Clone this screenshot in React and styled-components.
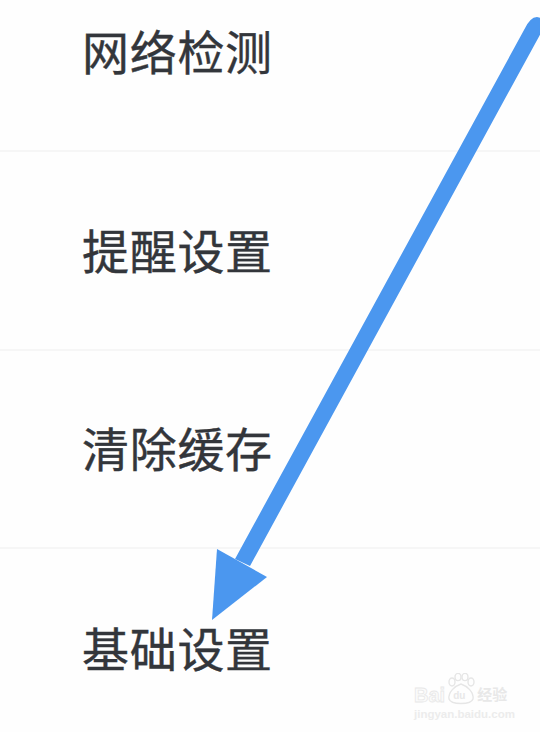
import React from "react";
import styled, { createGlobalStyle } from "styled-components";

const Global = createGlobalStyle`
  html, body {
    margin: 0;
    padding: 0;
    background: #fefefe;
  }
`;
const Page = styled.div`
  width: 540px;
  height: 732px;
  position: relative;
  overflow: hidden;
  background: #fefefe;
  font-family: "Liberation Sans", "Noto Sans CJK SC", sans-serif;
`;
const List = styled.div`
  display: flex;
  flex-direction: column;
`;
const Row = styled.div`
  height: ${(props) => props.h}px;
  box-sizing: border-box;
  display: flex;
  align-items: flex-end;
  padding: 0 0 ${(props) => props.pb}px 82px;
  border-bottom: ${(props) => (props.last ? "none" : "2px solid #f6f6f6")};
`;
const Label = styled.div`
  font-size: 47px;
  line-height: 56px;
  color: #33363b;
  letter-spacing: 0.7px;
  white-space: nowrap;
  -webkit-text-stroke: 0.4px #33363b;
`;
const Arrow = styled.svg`
  position: absolute;
  left: 0;
  top: 0;
`;
const Mark = styled.div`
  position: absolute;
  left: 414px;
  top: 673px;
  width: 104px;
  color: #ececec;
`;
const MarkTop = styled.div`
  display: flex;
  align-items: flex-end;
  height: 32px;
`;
const MarkBai = styled.span`
  font-size: 20px;
  line-height: 20px;
  font-weight: 700;
  color: #fbfbfb;
  -webkit-text-stroke: 0.8px #e8e8e8;
`;
const Paw = styled.div`
  position: relative;
  width: 30px;
  height: 32px;
  margin: 0 1px 0 1px;
`;
const PawText = styled.span`
  position: absolute;
  left: 7px;
  bottom: 3px;
  font-size: 10px;
  line-height: 12px;
  font-weight: 700;
  color: #e8e8e8;
`;
const MarkCn = styled.span`
  font-size: 15px;
  line-height: 20px;
  font-weight: 700;
  color: #e8e8e8;
  white-space: nowrap;
`;
const MarkSmall = styled.div`
  font-size: 11.5px;
  line-height: 14px;
  font-weight: 700;
  margin-top: 2px;
  white-space: nowrap;
`;

export default function App() {
  return (
    <Page>
      <Global />
      <List>
        <Row h={152} pb={68}>
          <Label>网络检测</Label>
        </Row>
        <Row h={199} pb={68}>
          <Label>提醒设置</Label>
        </Row>
        <Row h={198} pb={68}>
          <Label>清除缓存</Label>
        </Row>
        <Row h={183} pb={53} last>
          <Label>基础设置</Label>
        </Row>
      </List>
      <Arrow width="540" height="732" viewBox="0 0 540 732">
        <path
          d="M235 559 L524 30 Q530 17 537 17 L548 20 L250 566 Z"
          fill="#4b97ef"
        />
        <polygon points="212,620 217,549 267,577" fill="#4b97ef" />
      </Arrow>
      <Mark>
        <MarkTop>
          <MarkBai>Bai</MarkBai>
          <Paw>
            <svg width="30" height="32" viewBox="0 0 30 32">
              <g fill="none" stroke="#e6e6e6" strokeWidth="1.4">
                <ellipse cx="6" cy="9" rx="3" ry="4" />
                <ellipse cx="12" cy="4" rx="3" ry="3.6" />
                <ellipse cx="19" cy="4" rx="3" ry="3.6" />
                <ellipse cx="25" cy="9" rx="3" ry="4" />
                <path d="M15 11 C9 13 2 19 3 26 C5 32 25 32 27 26 C28 19 21 13 15 11 Z" />
              </g>
            </svg>
            <PawText>du</PawText>
          </Paw>
          <MarkCn>经验</MarkCn>
        </MarkTop>
        <MarkSmall>jingyan.baidu.com</MarkSmall>
      </Mark>
    </Page>
  );
}
